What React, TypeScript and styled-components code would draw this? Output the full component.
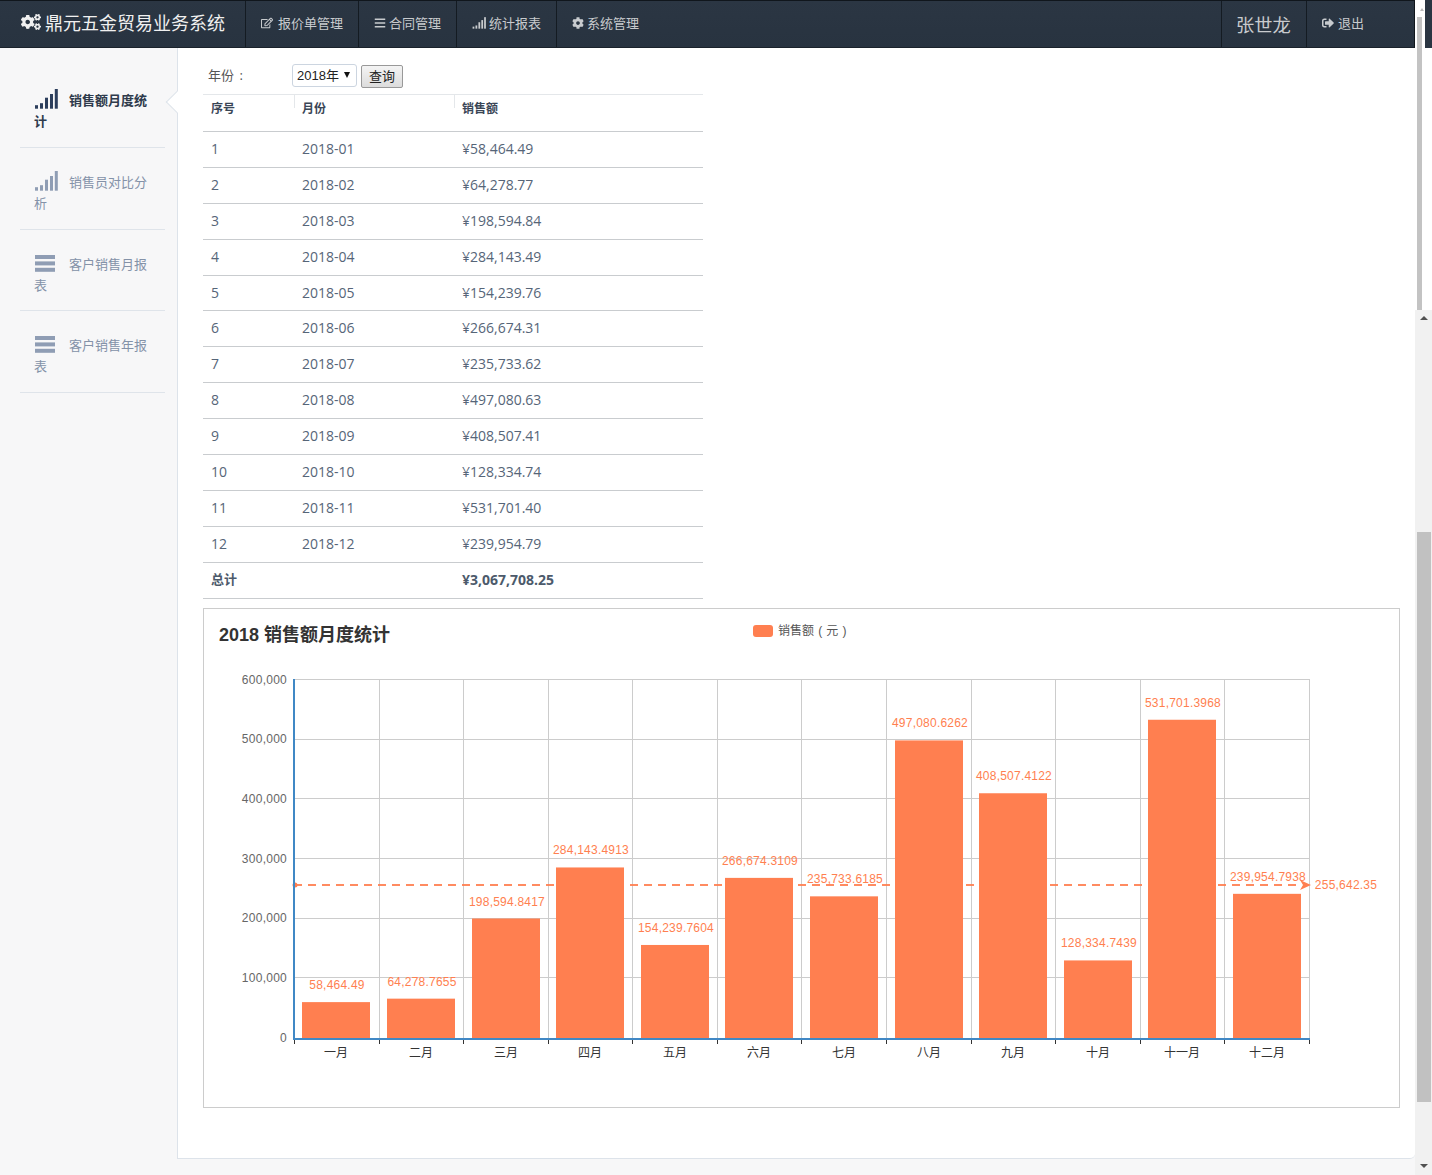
import styled, { createGlobalStyle } from "styled-components";
import { FaBars, FaCog, FaCogs, FaRegEdit, FaSignOutAlt } from "react-icons/fa";

const GlobalStyle = createGlobalStyle`
    html, body {
        margin: 0;
        height: 100%;
        overflow: hidden;
        background: #fff;
    }
    body {
        font-family: "Open Sans", "Noto Sans CJK SC", sans-serif;
        font-size: 13px;
        color: #566578;
    }
    * { box-sizing: border-box; }
`;

const Page = styled.div`
    display: grid;
    grid-template-columns: 1415px 17px;
    width: 1432px;
    height: 1175px;
`;

const Main = styled.div`
    display: flex;
    flex-direction: column;
    min-width: 0;
`;

const NavBar = styled.nav`
    display: flex;
    align-items: stretch;
    height: 48px;
    flex: none;
    background: linear-gradient(#2b3643, #283340);
    border-top: 1px solid #10161c;
    border-bottom: 1px solid #1a222b;
    border-right: 1px solid #10161c;
    color: #ccc;
`;

const Brand = styled.div`
    display: flex;
    align-items: center;
    width: 245px;
    padding: 0 0 5px 21px;
    font-size: 18px;
    color: #f0f0f0;
    svg {
        font-size: 20px;
        margin-right: 4px;
    }
`;

const NavItem = styled.a<{ $w: number; $gap?: number }>`
    display: flex;
    align-items: center;
    width: ${p => p.$w}px;
    padding-left: 15px;
    padding-bottom: 3px;
    gap: ${p => p.$gap ?? 3}px;
    border-left: 1px solid #141b22;
    font-size: 13px;
    color: #c8cbce;
    svg {
        font-size: 12px;
        flex: none;
    }
`;

const NavSpacer = styled.div`
    flex: 1;
`;

const UserName = styled.div`
    display: flex;
    align-items: center;
    width: 85px;
    padding: 0 0 0 14px;
    border-left: 1px solid #141b22;
    font-size: 18.3px;
    color: #c8cbce;
`;

const Body = styled.div`
    flex: 1;
    display: flex;
    background: #f7f7f8;
    min-height: 0;
`;

const Sidebar = styled.aside`
    position: relative;
    width: 177px;
    flex: none;
    padding: 17px 12px 0 20px;
`;

const SideItem = styled.a<{ $active?: boolean; $h: number }>`
    display: block;
    height: ${p => p.$h}px;
    padding: ${p => (p.$active ? 25 : 24)}px 10px 0 14px;
    border-bottom: 1px solid #dfe4ea;
    font-size: 13px;
    line-height: 21px;
    font-weight: ${p => (p.$active ? 700 : 400)};
    color: ${p => (p.$active ? "#2f3b4c" : "#8492a8")};
    svg {
        display: inline-block;
        vertical-align: -4px;
        margin-right: 11px;
        height: 20px;
        margin-top: -5px;
    }
`;

const Notch = styled.span`
    position: absolute;
    z-index: 2;
    left: 169px;
    top: 46px;
    width: 16px;
    height: 16px;
    background: #fff;
    border-left: 1px solid #dde3ea;
    border-bottom: 1px solid #dde3ea;
    transform: rotate(45deg);
`;

const Content = styled.main`
    flex: 1;
    min-width: 0;
    margin-bottom: 16px;
    padding: 16px 15px 0 25px;
    background: #fff;
    border-left: 1px solid #dde3ea;
    border-bottom: 1px solid #dde3ea;
    border-bottom-right-radius: 5px;
`;

const FilterRow = styled.form`
    display: flex;
    align-items: flex-start;
    height: 30px;
    padding-left: 5px;
`;

const FilterLabel = styled.label`
    width: 84px;
    font-size: 13px;
    line-height: 22px;
    word-spacing: 2px;
    color: #555;
`;

const SelectWrap = styled.span`
    position: relative;
    width: 65px;
    height: 23px;
    margin-right: 4px;
    &::after {
        content: "";
        position: absolute;
        right: 7px;
        top: 8px;
        border-left: 3.5px solid transparent;
        border-right: 3.5px solid transparent;
        border-top: 6px solid #111;
    }
`;

const YearSelect = styled.select`
    appearance: none;
    width: 100%;
    height: 100%;
    padding: 0 0 0 4px;
    background: #fff;
    border: 1px solid #ccd5e0;
    border-radius: 3px;
    font: 13px "Liberation Sans", "Noto Sans CJK SC", sans-serif;
    color: #222;
`;

const QueryButton = styled.button`
    width: 42px;
    height: 23px;
    margin-top: 1px;
    padding: 0 0 2px;
    background: linear-gradient(#f4f4f4, #dcdcdc);
    border: 1px solid #999;
    border-radius: 2px;
    font: 13px "Noto Sans CJK SC", sans-serif;
    color: #222;
`;

const SalesTable = styled.table`
    width: 500px;
    border-collapse: collapse;
    table-layout: fixed;
    border-top: 1px solid #e4e7ea;
`;

const HeadCell = styled.th<{ $w: number }>`
    position: relative;
    width: ${p => p.$w}px;
    height: 37px;
    padding: 0 8px 10px;
    text-align: left;
    font-size: 12px;
    font-weight: 700;
    color: #3a4656;
    border-bottom: 1px solid #c9cccf;
    &:not(:first-child)::before {
        content: "";
        position: absolute;
        left: 0;
        top: 0;
        height: 13px;
        border-left: 1px solid #e4e7ea;
    }
`;

const Row = styled.tr`
    td {
        height: 36px;
        padding: 0 8px 2px;
        border-bottom: 1px solid #c9cccf;
        font-size: 14px;
        color: #566578;
    }
    &:nth-child(5) td {
        height: 35px;
    }
`;

const TotalRow = styled.tr`
    td {
        height: 36px;
        padding: 0 8px 2px;
        border-bottom: 1px solid #c9cccf;
        font-size: 14px;
        font-weight: 700;
        color: #4c5a6b;
    }
    td:first-child {
        padding-bottom: 4px;
        font-size: 13px;
    }
`;

const ChartPanel = styled.section`
    margin-top: 9px;
    width: 1197px;
    height: 500px;
    border: 1px solid #ccc;
`;

const ChartSvg = styled.svg`
    display: block;
    text {
        font-family: "Liberation Sans", "Noto Sans CJK SC", sans-serif;
        font-size: 12px;
    }
    .value { fill: #ff7f50; text-anchor: middle; letter-spacing: 0.22px; }
    .axis { fill: #666; text-anchor: end; letter-spacing: 0.25px; }
    .cat { fill: #333; text-anchor: middle; }
    .title { font-size: 18px; font-weight: 700; fill: #333; }
    .legend { fill: #555; word-spacing: 0.8px; }
`;

const ScrollColumn = styled.div`
    display: flex;
    flex-direction: column;
`;

const UpperScroll = styled.div`
    display: flex;
    height: 310px;
    flex: none;
    background: #fff;
`;

const UpperTrack = styled.div`
    position: relative;
    width: 10px;
    padding: 17px 3px 0 2px;
    &::before {
        content: "";
        position: absolute;
        left: 5px;
        top: 8px;
        border-left: 2px solid transparent;
        border-right: 2px solid transparent;
        border-bottom: 3px solid #bbb;
    }
`;

const UpperThumb = styled.div`
    height: 100%;
    background: #c3c3c3;
`;

const UpperEdge = styled.div`
    height: 48px;
    width: 7px;
    background: #2a3542;
`;

const LowerScroll = styled.div`
    flex: 1;
    display: flex;
    flex-direction: column;
    align-items: center;
    background: #f1f1f1;
`;

const Arrow = styled.span<{ $down?: boolean }>`
    flex: none;
    margin: ${p => (p.$down ? "auto 0 7px" : "6px 0 0")};
    border-left: 4px solid transparent;
    border-right: 4px solid transparent;
    border-${p => (p.$down ? "top" : "bottom")}: 4px solid #505050;
`;

const LowerThumb = styled.div`
    width: 14px;
    height: 570px;
    margin-top: 212px;
    background: #c1c1c1;
`;

const rows = [
    ["2018-01", "¥58,464.49"],
    ["2018-02", "¥64,278.77"],
    ["2018-03", "¥198,594.84"],
    ["2018-04", "¥284,143.49"],
    ["2018-05", "¥154,239.76"],
    ["2018-06", "¥266,674.31"],
    ["2018-07", "¥235,733.62"],
    ["2018-08", "¥497,080.63"],
    ["2018-09", "¥408,507.41"],
    ["2018-10", "¥128,334.74"],
    ["2018-11", "¥531,701.40"],
    ["2018-12", "¥239,954.79"],
];

const bars = [
    { name: "一月", x: 302, value: 58464.49, label: "58,464.49" },
    { name: "二月", x: 387, value: 64278.7655, label: "64,278.7655" },
    { name: "三月", x: 472, value: 198594.8417, label: "198,594.8417" },
    { name: "四月", x: 556, value: 284143.4913, label: "284,143.4913" },
    { name: "五月", x: 641, value: 154239.7604, label: "154,239.7604" },
    { name: "六月", x: 725, value: 266674.3109, label: "266,674.3109" },
    { name: "七月", x: 810, value: 235733.6185, label: "235,733.6185" },
    { name: "八月", x: 895, value: 497080.6262, label: "497,080.6262" },
    { name: "九月", x: 979, value: 408507.4122, label: "408,507.4122" },
    { name: "十月", x: 1064, value: 128334.7439, label: "128,334.7439" },
    { name: "十一月", x: 1148, value: 531701.3968, label: "531,701.3968" },
    { name: "十二月", x: 1233, value: 239954.7938, label: "239,954.7938" },
];

const gridX = [294, 379, 463, 548, 632, 717, 801, 886, 971, 1055, 1140, 1224, 1309];
const gridY = [679, 739, 798, 858, 918, 977, 1038];

function SignalBars() {
    return (
        <>
            <rect x="1" y="16.2" width="3" height="3.5" />
            <rect x="6" y="14.2" width="3" height="5.5" />
            <rect x="11" y="8.7" width="3" height="11" />
            <rect x="16" y="5" width="3" height="14.7" />
            <rect x="20.8" y="0" width="3" height="19.7" />
        </>
    );
}

function SignalIcon({ color }: { color: string }) {
    return (
        <svg width="24" height="20" viewBox="0 0 24 20" fill={color}>
            <SignalBars />
        </svg>
    );
}

function MenuIcon() {
    return (
        <svg width="24" height="20" viewBox="0 0 24 20" fill="#8f9db4">
            <rect x="1" y="2" width="20" height="4" />
            <rect x="1" y="8.4" width="20" height="4" />
            <rect x="1" y="14.8" width="20" height="4" />
        </svg>
    );
}

function NavSignal() {
    return (
        <svg width="14" height="12" viewBox="0 0 24 20" fill="#c8cbce">
            <SignalBars />
        </svg>
    );
}

function SalesChart() {
    const bottom = 1038;
    const scale = (bottom - 680) / 600000;
    return (
        <ChartSvg width="1195" height="498" viewBox="204 609 1195 498">
            <text className="title" x="219" y="641">2018 销售额月度统计</text>
            <rect x="753" y="625" width="20" height="12" rx="3" fill="#ff7f50" />
            <text className="legend" x="778" y="635">销售额 ( 元 )</text>

            {gridY.map((gy, i) => (
                <g key={gy}>
                    <line x1={294} x2={1309} y1={gy + 0.5} y2={gy + 0.5} stroke="#ccc" />
                    <text className="axis" x="287" y={Math.round(683.5 + i * 59.67)}>
                        {(600000 - i * 100000).toLocaleString("en-US")}
                    </text>
                </g>
            ))}
            {gridX.map(gx => (
                <g key={gx}>
                    <line x1={gx + 0.5} x2={gx + 0.5} y1={679} y2={bottom} stroke="#ccc" />
                    <line x1={gx + 0.5} x2={gx + 0.5} y1={bottom + 1} y2={bottom + 6} stroke="#333" />
                </g>
            ))}

            <line x1="294" x2="1300" y1="885" y2="885" stroke="#ff7f50" strokeWidth="2" strokeDasharray="8 6" opacity="0.9" />
            <circle cx="295" cy="885" r="2.5" fill="#ff7f50" />
            <path d="M1300 880 L1311 885 L1300 890 L1303 885 Z" fill="#ff7f50" />

            {bars.map(b => {
                const barTop = bottom - b.value * scale - 1;
                return (
                    <g key={b.name}>
                        <rect x={b.x} y={barTop} width="68" height={bottom - barTop} fill="#ff7f50" />
                        <text className="value" x={b.x + 35} y={barTop - 13}>{b.label}</text>
                        <text className="cat" x={b.x + 34} y="1057">{b.name}</text>
                    </g>
                );
            })}

            <rect x="293" y="679" width="2" height="361" fill="#4088c5" />
            <rect x="293" y="1038" width="1017" height="2" fill="#4088c5" />
            <text className="value" x="1346" y="889">255,642.35</text>
        </ChartSvg>
    );
}

export default function App() {
    return (
        <Page>
            <GlobalStyle />
            <Main>
                <NavBar>
                    <Brand><FaCogs />鼎元五金贸易业务系统</Brand>
                    <NavItem $w={113} $gap={5}><FaRegEdit />报价单管理</NavItem>
                    <NavItem $w={98}><FaBars />合同管理</NavItem>
                    <NavItem $w={100}><NavSignal />统计报表</NavItem>
                    <NavItem $w={100}><FaCog />系统管理</NavItem>
                    <NavSpacer />
                    <UserName>张世龙</UserName>
                    <NavItem $w={108} $gap={4}><FaSignOutAlt />退出</NavItem>
                </NavBar>
                <Body>
                    <Sidebar>
                        <SideItem $active $h={83}><SignalIcon color="#2c3e5c" />销售额月度统计</SideItem>
                        <SideItem $h={82}><SignalIcon color="#8f9db4" />销售员对比分析</SideItem>
                        <SideItem $h={81}><MenuIcon />客户销售月报表</SideItem>
                        <SideItem $h={82}><MenuIcon />客户销售年报表</SideItem>
                        <Notch />
                    </Sidebar>
                    <Content>
                        <FilterRow>
                            <FilterLabel>年份 :</FilterLabel>
                            <SelectWrap>
                                <YearSelect defaultValue="2018">
                                    <option value="2018">2018年</option>
                                </YearSelect>
                            </SelectWrap>
                            <QueryButton type="button">查询</QueryButton>
                        </FilterRow>
                        <SalesTable>
                            <thead>
                                <tr>
                                    <HeadCell $w={91}>序号</HeadCell>
                                    <HeadCell $w={160}>月份</HeadCell>
                                    <HeadCell $w={249}>销售额</HeadCell>
                                </tr>
                            </thead>
                            <tbody>
                                {rows.map(([month, amount], i) => (
                                    <Row key={month}>
                                        <td>{i + 1}</td>
                                        <td>{month}</td>
                                        <td>{amount}</td>
                                    </Row>
                                ))}
                                <TotalRow>
                                    <td colSpan={2}>总计</td>
                                    <td>¥3,067,708.25</td>
                                </TotalRow>
                            </tbody>
                        </SalesTable>
                        <ChartPanel><SalesChart /></ChartPanel>
                    </Content>
                </Body>
            </Main>
            <ScrollColumn>
                <UpperScroll>
                    <UpperTrack><UpperThumb /></UpperTrack>
                    <UpperEdge />
                </UpperScroll>
                <LowerScroll>
                    <Arrow />
                    <LowerThumb />
                    <Arrow $down />
                </LowerScroll>
            </ScrollColumn>
        </Page>
    );
}
